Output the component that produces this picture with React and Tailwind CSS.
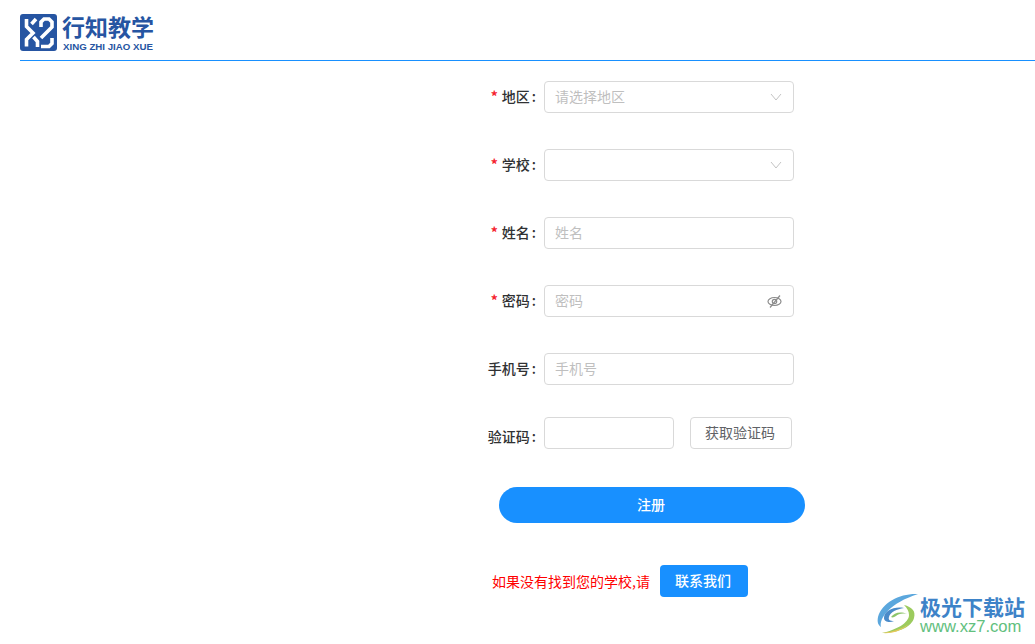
const cjk = "font-['Noto_Sans_CJK_SC','Noto_Sans',sans-serif]";

function Chevron() {
  return (
    <svg width="12" height="8" viewBox="0 0 12 8" fill="none" stroke="#c4c4c4" strokeWidth="1">
      <path d="M1 1l5 6 5-6" />
    </svg>
  );
}

function EyeSlash() {
  return (
    <svg width="15" height="13" viewBox="0 0 15 13" fill="none" stroke="#8c8c8c" strokeWidth="1.2">
      <ellipse cx="7.500" cy="6.500" rx="6.500" ry="4" />
      <circle cx="7.500" cy="6.500" r="2.200" />
      <path d="M13 .5L3 12.500" />
    </svg>
  );
}

function Logo() {
  return (
    <svg width="37" height="37" viewBox="0 0 37 37" fill="none">
      <rect width="37" height="37" rx="3" fill="#2655a2" />
      <g stroke="#fff" strokeWidth="3.600">
        <path d="M6.500 5v7.500l6.500 6.500-6.500 6.500v7" />
        <path d="M16 5l-4.500 5" />
        <path d="M13.500 23l4 4.500v5.500" />
        <path d="M21 13V8l3-3h5l3 3v5L21 24" />
        <path d="M21 32.500h8l3-3V24" />
      </g>
    </svg>
  );
}

function Swirl() {
  return (
    <svg width="44" height="42" viewBox="0 0 44 42">
      <path d="M42 1C25 0 6 9 2 24c-1 5 0 8 3 10C3 25 14 10 42 1z" fill="#5ba7dd" />
      <path d="M28 15C18 13 8 18 8 25c0 4 6 5 10 3-4 0-6-1-5-4 1-5 8-8 15-9z" fill="#4a8bc9" />
      <path d="M15 24c3-4 9-6 16-3-5-1-9 0-11 2-2 1-3 2-5 1z" fill="#8cc46a" />
      <path d="M28 12c8 2 12 6 10 13-2 8-14 15-32 15 14-3 27-10 27-18 0-4-2-7-5-10z" fill="#9ccb5e" />
      <path d="M6 40c10-1 20-4 27-9-6 6-16 10-27 9z" fill="#e8c85a" />
    </svg>
  );
}

function Label({ text, required, className = "" }) {
  return (
    <label className={`h-[32px] w-[56px] shrink-0 text-right text-[14px] font-medium leading-[30px] whitespace-nowrap text-[#303133] ${className}`}>
      {required && <span className="mr-[4px] font-bold text-[#f5222d]">*</span>}
      {text}
      <span className="ml-[2px]">:</span>
    </label>
  );
}

function Field({ label, required, placeholder, icon }) {
  return (
    <div className="flex items-center gap-[8px]">
      <Label text={label} required={required} />
      <div className="flex h-[32px] w-[250px] items-center justify-between rounded-[4px] border border-[#d9d9d9] bg-white pl-[10px] pr-[11px]">
        <span className="mb-[2px] text-[14px] text-[#bfbfbf]">{placeholder}</span>
        {icon}
      </div>
    </div>
  );
}

export default function App() {
  return (
    <div className={`relative h-[644px] w-[1035px] overflow-hidden bg-white ${cjk}`}>
      <header className="ml-[20px] flex h-[61px] items-start gap-[5px] border-b border-[#1890ff] pt-[14px]">
        <Logo />
        <div className="text-[#2655a2]">
          <div className="text-[23px] font-bold leading-[24px]">行知教学</div>
          <div className="mt-[3px] ml-[1px] font-['Liberation_Sans',sans-serif] text-[9.700px] font-bold leading-[12px] whitespace-nowrap">
            XING ZHI JIAO XUE
          </div>
        </div>
      </header>

      <main className="ml-[480px] mt-[20px] flex flex-col">
        <div className="flex flex-col gap-[36px]">
          <Field label="地区" required placeholder="请选择地区" icon={<Chevron />} />
          <Field label="学校" required placeholder="" icon={<Chevron />} />
          <Field label="姓名" required placeholder="姓名" />
          <Field label="密码" required placeholder="密码" icon={<EyeSlash />} />
          <Field label="手机号" placeholder="手机号" />
        </div>

        <div className="mt-[32px] flex h-[32px] items-start gap-[8px]">
          <Label text="验证码" className="mt-[4px]" />
          <div className="h-[32px] w-[130px] rounded-[4px] border border-[#d9d9d9] bg-white" />
          <button className="ml-[8px] h-[32px] w-[102px] rounded-[4px] border border-[#d9d9d9] bg-white pb-[2px] pr-[2px] text-[14px] text-[#606266]">
            获取验证码
          </button>
        </div>

        <button className="ml-[19px] mt-[38px] h-[36px] w-[306px] rounded-full bg-[#1890ff] pb-[2px] pr-[2px] text-[14px] font-medium text-white">
          注册
        </button>

        <div className="ml-[12px] mt-[42px] flex items-center gap-[10px]">
          <span className="text-[14px] leading-[30px] whitespace-nowrap text-[#ff0000]">如果没有找到您的学校,请</span>
          <button className="h-[32px] w-[88px] rounded-[4px] bg-[#1890ff] pb-[2px] pr-[2px] text-[14px] font-medium text-white">
            联系我们
          </button>
        </div>
      </main>

      {/* watermark */}
      <div className="absolute left-[876px] top-[593px] flex items-center">
        <Swirl />
        <div className="flex flex-col">
          <span className="text-[21px] font-bold leading-[24px] whitespace-nowrap text-[#3d83c8]">极光下载站</span>
          <span className="font-['Liberation_Sans',sans-serif] text-[16.600px] leading-[17px] whitespace-nowrap text-[#62c07e]">www.xz7.com</span>
        </div>
      </div>
    </div>
  );
}
